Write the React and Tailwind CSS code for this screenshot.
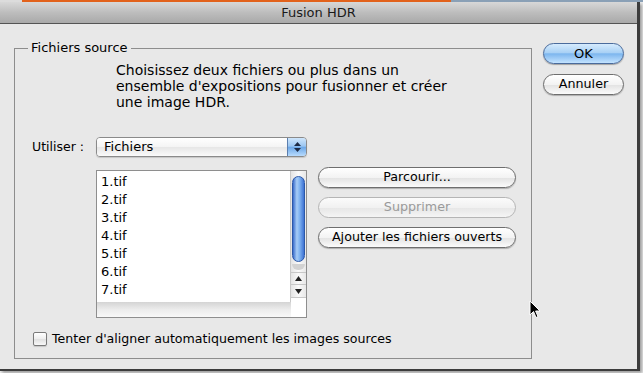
import React from 'react'

const font = { fontFamily: '"DejaVu Sans", "Liberation Sans", sans-serif' }

function AquaButton({ children, disabled, wide }) {
  return (
    <div
      className={`flex items-center justify-center h-[21px] rounded-full border text-[12.7px] leading-none ${
        disabled
          ? 'border-[#b5b5b5] text-[#9a9a9a] bg-[linear-gradient(#fbfbfb,#f1f1f1_50%,#e6e6e6_51%,#f5f5f5)]'
          : 'border-[#6e6e6e] text-black bg-[linear-gradient(#ffffff,#f3f3f3_50%,#e2e2e2_51%,#fbfbfb)] shadow-[0_1px_1px_rgba(0,0,0,0.25)]'
      } ${wide ? 'w-[198px]' : 'w-[81px]'}`}
    >
      {children}
    </div>
  )
}

function DefaultButton({ children }) {
  return (
    <div className="flex items-center justify-center w-[81px] h-[21px] rounded-full border border-[#4a6b9c] text-[13px] leading-none text-black bg-[linear-gradient(#d6ebfd,#a9d1f5_45%,#7db6ee_52%,#c3e3ff)] shadow-[0_1px_1px_rgba(0,0,0,0.3)]">
      {children}
    </div>
  )
}

function SelectBox() {
  return (
    <div className="flex w-[211px] h-[20px] rounded-[4px] border border-[#8a8a8a] overflow-hidden shadow-[0_1px_1px_rgba(0,0,0,0.15)]">
      <div className="flex-1 flex items-center pl-[7px] text-[13px] bg-[linear-gradient(#ffffff,#f4f4f4_50%,#e6e6e6_51%,#fafafa)]">
        Fichiers
      </div>
      <div className="w-[19px] flex flex-col items-center justify-center gap-[2px] border-l border-[#5b7eae] bg-[linear-gradient(#cfe6fc,#9bc6f1_45%,#6da8e8_52%,#b8dbfd)]">
        <svg width="7" height="4" viewBox="0 0 7 4"><path d="M3.5 0 L7 4 L0 4 Z" fill="#1c2a44" /></svg>
        <svg width="7" height="4" viewBox="0 0 7 4"><path d="M0 0 L7 0 L3.5 4 Z" fill="#1c2a44" /></svg>
      </div>
    </div>
  )
}

function FileList() {
  const files = ['1.tif', '2.tif', '3.tif', '4.tif', '5.tif', '6.tif', '7.tif', '8.tif']
  return (
    <div className="relative flex w-[211px] h-[148px] border border-[#8e8e8e] bg-white overflow-hidden">
      <div className="flex-1 flex flex-col pt-[1px]">
        {files.map((f) => (
          <div key={f} className="h-[18px] flex items-center pl-[4px] text-[13px] leading-none shrink-0">
            {f}
          </div>
        ))}
      </div>
      {/* vertical scroller */}
      <div className="w-[16px] flex flex-col border-l border-[#c8c8c8] bg-[linear-gradient(90deg,#e4e4e4,#fafafa_50%,#e8e8e8)]">
        <div className="mx-auto mt-[5px] w-[13px] h-[86px] rounded-full border border-[#2c58a8] bg-[linear-gradient(90deg,#3a6ccb,#a7cdf7_35%,#7fb2f0_60%,#3e72d3)]" />
        <div className="mx-auto mt-[2px] w-[13px] h-[6px] rounded-b-full bg-[#d2d2d2]" />
        <div className="mt-auto flex flex-col border-t border-[#c8c8c8]">
          <div className="h-[12px] flex items-center justify-center border-b border-[#c8c8c8]">
            <svg width="7" height="5" viewBox="0 0 7 5"><path d="M3.5 0 L7 5 L0 5 Z" fill="#222" /></svg>
          </div>
          <div className="h-[12px] flex items-center justify-center">
            <svg width="7" height="5" viewBox="0 0 7 5"><path d="M0 0 L7 0 L3.5 5 Z" fill="#222" /></svg>
          </div>
          <div className="h-[20px] bg-white border-t border-[#c8c8c8]" />
        </div>
      </div>
      {/* bottom band */}
      <div className="absolute left-0 bottom-0 w-[194px] h-[15px] bg-[linear-gradient(#d4d4d4,#ececec_50%,#f8f8f8)]" />
    </div>
  )
}

function Cursor() {
  return (
    <svg className="absolute left-[529px] top-[300px]" width="12" height="19" viewBox="0 0 12 19">
      <path d="M1 1 L1 15 L4.5 11.5 L7 17.5 L9 16.6 L6.6 11 L11 11 Z" fill="#000" stroke="#fff" strokeWidth="1" strokeLinejoin="round" />
    </svg>
  )
}

export default function App() {
  return (
    <div className="relative w-[643px] h-[373px] bg-[#eeeeee] overflow-hidden text-black" style={font}>
      {/* desktop strip behind */}
      <div className="flex h-[2px]">
        <div className="w-[22px] bg-[#dcdcdc]" />
        <div className="w-[429px] bg-[#e2621c]" />
        <div className="flex-1 bg-[#8aa0b6]" />
      </div>

      {/* window */}
      <div className="flex flex-col w-[640px] h-[369px] border-r-[3px] border-b-[2px] border-[#3c3c3c] bg-[#e8e8e8] shadow-[2px_2px_3px_rgba(0,0,0,0.35)]">
        <div className="h-[22px] shrink-0 flex items-center justify-center border-b border-[#545454] bg-[linear-gradient(#d8d8d8,#bdbdbd_50%,#a9a9a9)] text-[13px] text-[#1a1a1a]">
          Fusion HDR
        </div>

        <div className="flex items-start pl-[14px]">
          {/* group box */}
          <div className="relative mt-[24px] w-[518px] h-[311px] border border-[#8d8d8d] flex flex-col">
            <span className="absolute -top-[10px] left-[13px] px-[3px] bg-[#e8e8e8] text-[13px] leading-[18px]">
              Fichiers source
            </span>

            <p className="mt-[13px] pl-[101px] text-[14px] leading-[16px]">
              Choisissez deux fichiers ou plus dans un
              <br />
              ensemble d'expositions pour fusionner et créer
              <br />
              une image HDR.
            </p>

            <div className="flex items-center mt-[27px] pl-[17px]">
              <span className="w-[64px] text-[12.5px]">Utiliser :</span>
              <SelectBox />
            </div>

            <div className="flex items-start mt-[13px] pl-[81px]">
              <FileList />
              <div className="flex flex-col gap-[9px] ml-[11px] -mt-[3px]">
                <AquaButton wide>Parcourir...</AquaButton>
                <AquaButton wide disabled>Supprimer</AquaButton>
                <AquaButton wide>Ajouter les fichiers ouverts</AquaButton>
              </div>
            </div>

            <label className="flex items-center gap-[5px] mt-[12px] pl-[18px] text-[12.6px]">
              <span className="w-[14px] h-[14px] rounded-[2px] border border-[#7a7a7a] bg-[linear-gradient(#ffffff,#ededed_50%,#e0e0e0_51%,#f8f8f8)] shadow-[0_1px_1px_rgba(0,0,0,0.15)]" />
              Tenter d'aligner automatiquement les images sources
            </label>
          </div>

          {/* right column */}
          <div className="flex flex-col gap-[10px] ml-[11px] mt-[19px]">
            <DefaultButton>OK</DefaultButton>
            <AquaButton>Annuler</AquaButton>
          </div>
        </div>
      </div>

      <Cursor />
    </div>
  )
}
